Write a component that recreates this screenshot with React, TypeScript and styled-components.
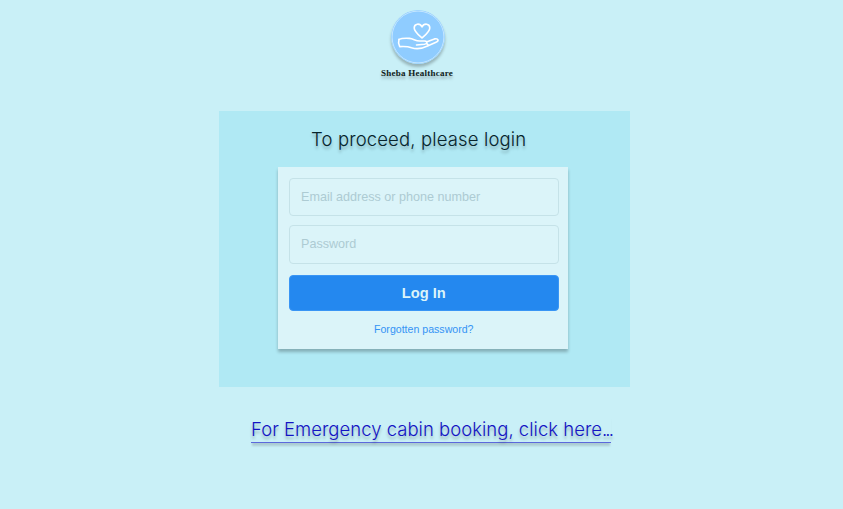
import React from "react";
import styled, { createGlobalStyle } from "styled-components";

const GlobalStyle = createGlobalStyle`
  * { box-sizing: border-box; }
  body { margin: 0; background: #c9f0f7; font-family: "Liberation Sans", Arial, sans-serif; }
`;

const Page = styled.main`
  height: 509px;
  overflow: hidden;
  background: #c9f0f7;
`;

const Brand = styled.header`
  width: 106px;
  height: 111px;
  margin-left: 364px;
  padding-top: 10px;
  display: flex;
  flex-direction: column;
  align-items: center;
`;

const Emblem = styled.svg`
  display: block;
  width: 54px;
  height: 54px;
  margin-left: 1px;
  flex: none;
  border-radius: 50%;
  box-shadow: 0 3px 3px rgba(0, 0, 0, 0.25);
`;

const BrandName = styled.span`
  margin-top: 3px;
  font: 700 9px/12px "Liberation Serif", serif;
  letter-spacing: 0.24px;
  white-space: nowrap;
  color: #101c20;
  text-shadow: 0 3px 3px rgba(0, 0, 0, 0.25);
`;

const Panel = styled.section`
  width: 411px;
  height: 276px;
  margin-left: 219px;
  padding: 14px 62px 0 59px;
  background: #b0e9f4;
`;

const Title = styled.h1`
  margin: 0 0 14px 33px;
  font: 300 18.5px/28px Inter, sans-serif;
  letter-spacing: 0.14px;
  white-space: nowrap;
  color: #07242c;
  text-shadow: 0 3px 3px rgba(0, 0, 0, 0.25);
`;

const Form = styled.form`
  width: 290px;
  height: 182px;
  padding: 10.5px 9.5px 0 11px;
  display: flex;
  flex-direction: column;
  background: #dbf4f9;
  box-shadow: 0 3px 3px rgba(0, 0, 0, 0.25);
`;

const Field = styled.input`
  width: 100%;
  height: 38.5px;
  margin: 0 0 9px;
  padding: 0 11px;
  border: 1px solid #c5e2e8;
  border-radius: 4px;
  outline: 0;
  background: transparent;
  font: 12.6px "Liberation Sans", Arial, sans-serif;
  &::placeholder { color: #adcbd3; opacity: 1; }
`;

const Submit = styled.button`
  height: 36px;
  margin: 2px 0 0;
  padding: 0;
  border: 1px solid #3995f5;
  border-radius: 4px;
  background: #2488ef;
  color: #dbf4f9;
  font: 700 14.7px/34px "Liberation Sans", Arial, sans-serif;
`;

const Forgotten = styled.a`
  align-self: center;
  margin-top: 12px;
  font-size: 10.6px;
  line-height: 13px;
  color: #3493f5;
  text-decoration: none;
`;

const Emergency = styled.a`
  display: block;
  width: 360px;
  height: 28px;
  margin: 28px 0 0 251px;
  border-bottom: 1px solid #5b69dc;
  box-shadow: 0 4px 2px -1px rgba(0, 0, 0, 0.15);
  font: 300 18.5px/29px Inter, sans-serif;
  letter-spacing: 0.02px;
  white-space: nowrap;
  text-decoration: none;
  color: #1414c4;
  text-shadow: 0 3px 3px rgba(0, 0, 0, 0.25);
`;

const Ellipsis = styled.span`
  letter-spacing: -1.9px;
`;

export default function App() {
  return (
    <>
      <GlobalStyle />
      <Page>
        <Brand>
          <Emblem viewBox="0 0 54 54" fill="none" aria-hidden="true">
            <circle cx="27" cy="27" r="27" fill="#8fccff" />
            <circle cx="27" cy="27" r="25.9" stroke="#c3e5ff" strokeWidth="1" />
            <g stroke="#fff" strokeWidth="1.6" strokeLinecap="round" strokeLinejoin="round">
              <path d="M31 28 C27 24.5 23.2 21.5 23.2 18 C23.2 13.3 29 12.9 31 17 C33 12.9 38.8 13.3 38.8 18 C38.8 21.5 35 24.5 31 28Z" />
              <path d="M8 29.4 C11 28 15 28.2 18.5 28.4 C22.5 28.6 24.5 31.2 29 31 L33.8 31 C37 31.4 36 34 33.5 34.3 L25.5 35" />
              <path d="M36 31.7 L43.5 28.9 C47.5 28 48.2 31.1 45 32.2 L36.5 36 C32 38.2 25.5 39.4 20.5 37.7 C16.5 36.2 12 36.4 8.7 36.6 C7.5 34.5 7.2 31.8 8 29.4" />
              <path d="M35.8 33.6 L37.5 35.3" />
            </g>
          </Emblem>
          <BrandName>Sheba Healthcare</BrandName>
        </Brand>
        <Panel>
          <Title>To proceed, please login</Title>
          <Form onSubmit={(e) => e.preventDefault()}>
            <Field type="text" placeholder="Email address or phone number" />
            <Field type="password" placeholder="Password" />
            <Submit type="submit">Log In</Submit>
            <Forgotten href="#">Forgotten password?</Forgotten>
          </Form>
        </Panel>
        <Emergency href="#">
          For Emergency cabin booking, click here<Ellipsis>...</Ellipsis>
        </Emergency>
      </Page>
    </>
  );
}
